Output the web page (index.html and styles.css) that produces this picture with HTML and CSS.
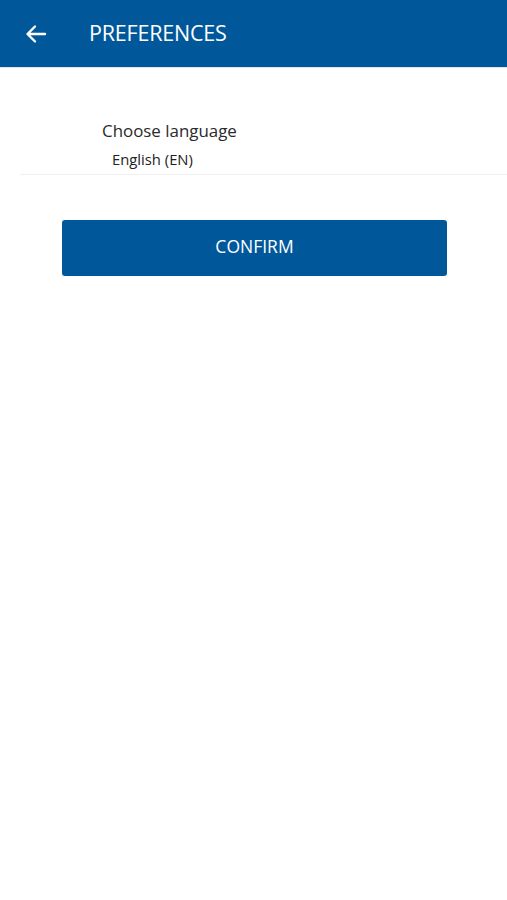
FILE: index.html
```html
<!DOCTYPE html>
<html lang="en">
<head>
  <meta charset="UTF-8">
  <meta name="viewport" content="width=device-width, initial-scale=1.0">
  <title>Preferences</title>
  <link rel="stylesheet" href="styles.css">
</head>
<body>
  <div class="header">
    <button class="back" aria-label="Back">
      <svg width="22" height="20" viewBox="0 0 22 20">
        <path d="M20 10H3M10 2.5L2.5 10L10 17.5" fill="none" stroke="#fff" stroke-width="2.4" stroke-linecap="round" stroke-linejoin="round"/>
      </svg>
    </button>
    <div class="title">PREFERENCES</div>
  </div>
  <div class="content">
    <div class="field">
      <div class="label">Choose language</div>
      <div class="value">English (EN)</div>
    </div>
    <button class="confirm">CONFIRM</button>
  </div>
</body>
</html>
```

FILE: styles.css
```css
body {
  margin: 0;
  font-family: "Open Sans", "Noto Sans", sans-serif;
  background-color: #fff;
  color: #222;
}

.header {
  height: 67px;
  background-color: #00589b;
  display: flex;
  align-items: center;
  border-bottom: 1px solid #dfe6ee;
}

.back {
  width: 24px;
  height: 24px;
  margin-left: 24px;
  padding: 0;
  border: none;
  background: none;
  display: flex;
  align-items: center;
  justify-content: center;
}

.title {
  margin-left: 41px;
  margin-top: -2px;
  color: #fff;
  font-size: 21.5px;
  letter-spacing: -0.2px;
}

.content {
  padding-top: 51px;
}

.field {
  margin-left: 20px;
  padding-bottom: 5px;
  border-bottom: 1px solid #f0f0f0;
}

.label {
  margin-left: 82px;
  font-size: 16.9px;
  line-height: 24px;
  color: #2a2a2a;
}

.value {
  margin-left: 92px;
  margin-top: 6px;
  font-size: 14.8px;
  line-height: 20px;
  color: #222;
}

.confirm {
  display: block;
  width: 385px;
  height: 56px;
  margin: 45px 0 0 62px;
  padding: 0 0 4px;
  border: none;
  border-radius: 3px;
  background-color: #00589b;
  color: #fff;
  font-family: inherit;
  font-size: 17.5px;
}
```
